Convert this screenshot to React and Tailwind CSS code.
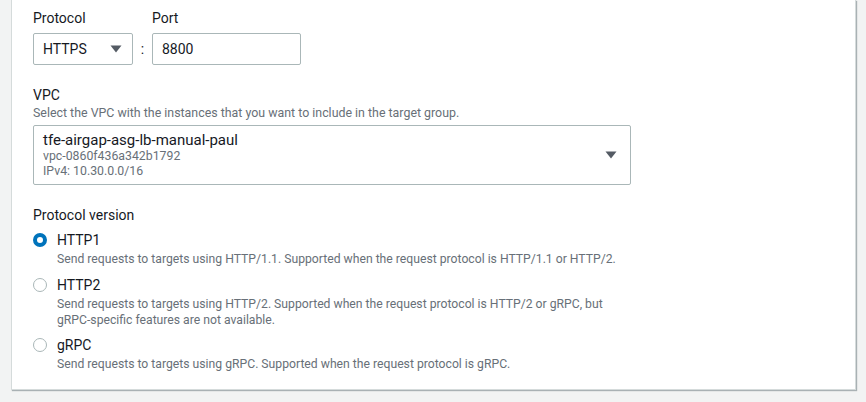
import React from "react";

function Caret({ className = "" }) {
  return (
    <svg width="12" height="8" viewBox="0 0 12 8" className={className}>
      <path d="M0.5 0.5 H11.5 L6 7.5 Z" fill="#545b64" />
    </svg>
  );
}

function Radio({ checked }) {
  if (checked) {
    return (
      <span className="mt-[2px] box-border flex h-[14px] w-[14px] shrink-0 items-center justify-center rounded-full border-[4px] border-[#0073bb] bg-white" />
    );
  }
  return (
    <span className="mt-[2px] box-border h-[14px] w-[14px] shrink-0 rounded-full border border-[#aab7b8] bg-white" />
  );
}

function Option({ checked, title, desc }) {
  return (
    <div className="flex gap-[10px]">
      <Radio checked={checked} />
      <div className="flex flex-col">
        <div className="text-[14px] leading-[18px] text-[#16191f]">{title}</div>
        <div className="mt-[2px] text-[12.2px] leading-[16px] text-[#687078]">{desc}</div>
      </div>
    </div>
  );
}

export default function App() {
  return (
    <div
      className="h-[402px] w-[866px] overflow-hidden bg-[#f2f3f3]"
      style={{ fontFamily: '"Roboto", "Liberation Sans", sans-serif' }}
    >
      <div className="ml-[11px] h-[390px] w-[845px] border-l border-r border-b border-[#d5dbdb] bg-white shadow-[1px_1px_1px_0_rgba(0,28,36,0.3)]">
        <div className="pl-[21px] pt-[8px]">
          <div className="flex items-end">
            <div className="flex flex-col">
              <div className="text-[14px] leading-[20px] text-[#16191f]">Protocol</div>
              <div className="mt-[5px] flex h-[32px] w-[100px] items-center justify-between rounded-[2px] border border-[#aab7b8] pl-[9px] pr-[10px]">
                <span className="text-[14px] text-[#16191f]">HTTPS</span>
                <Caret />
              </div>
            </div>
            <div className="flex h-[32px] w-[19px] items-center justify-center text-[14px] text-[#16191f]">:</div>
            <div className="flex flex-col">
              <div className="text-[14px] leading-[20px] text-[#16191f]">Port</div>
              <div className="mt-[5px] flex h-[32px] w-[149px] items-center rounded-[2px] border border-[#aab7b8] pl-[9px]">
                <span className="text-[14px] text-[#16191f]">8800</span>
              </div>
            </div>
          </div>

          <div className="mt-[20px] text-[14px] leading-[20px] text-[#16191f]">VPC</div>
          <div className="text-[12.4px] leading-[16px] text-[#687078]">
            Select the VPC with the instances that you want to include in the target group.
          </div>
          <div className="mt-[4px] flex h-[60px] w-[598px] items-center justify-between rounded-[2px] border border-[#aab7b8] pl-[9px] pr-[13px]">
            <div className="flex flex-col">
              <div className="text-[15px] leading-[18px] text-[#16191f]">tfe-airgap-asg-lb-manual-paul</div>
              <div className="text-[12.3px] leading-[15px] text-[#687078]">vpc-0860f436a342b1792</div>
              <div className="text-[12.3px] leading-[15px] text-[#687078]">IPv4: 10.30.0.0/16</div>
            </div>
            <Caret />
          </div>

          <div className="mt-[20px] text-[14px] leading-[20px] text-[#16191f]">Protocol version</div>
          <div className="mt-[6px] flex flex-col gap-[8.5px]">
            <Option
              checked
              title="HTTP1"
              desc="Send requests to targets using HTTP/1.1. Supported when the request protocol is HTTP/1.1 or HTTP/2."
            />
            <Option
              title="HTTP2"
              desc={
                <>
                  Send requests to targets using HTTP/2. Supported when the request protocol is HTTP/2 or gRPC, but
                  <br />
                  gRPC-specific features are not available.
                </>
              }
            />
            <Option
              title="gRPC"
              desc="Send requests to targets using gRPC. Supported when the request protocol is gRPC."
            />
          </div>
        </div>
      </div>
    </div>
  );
}
